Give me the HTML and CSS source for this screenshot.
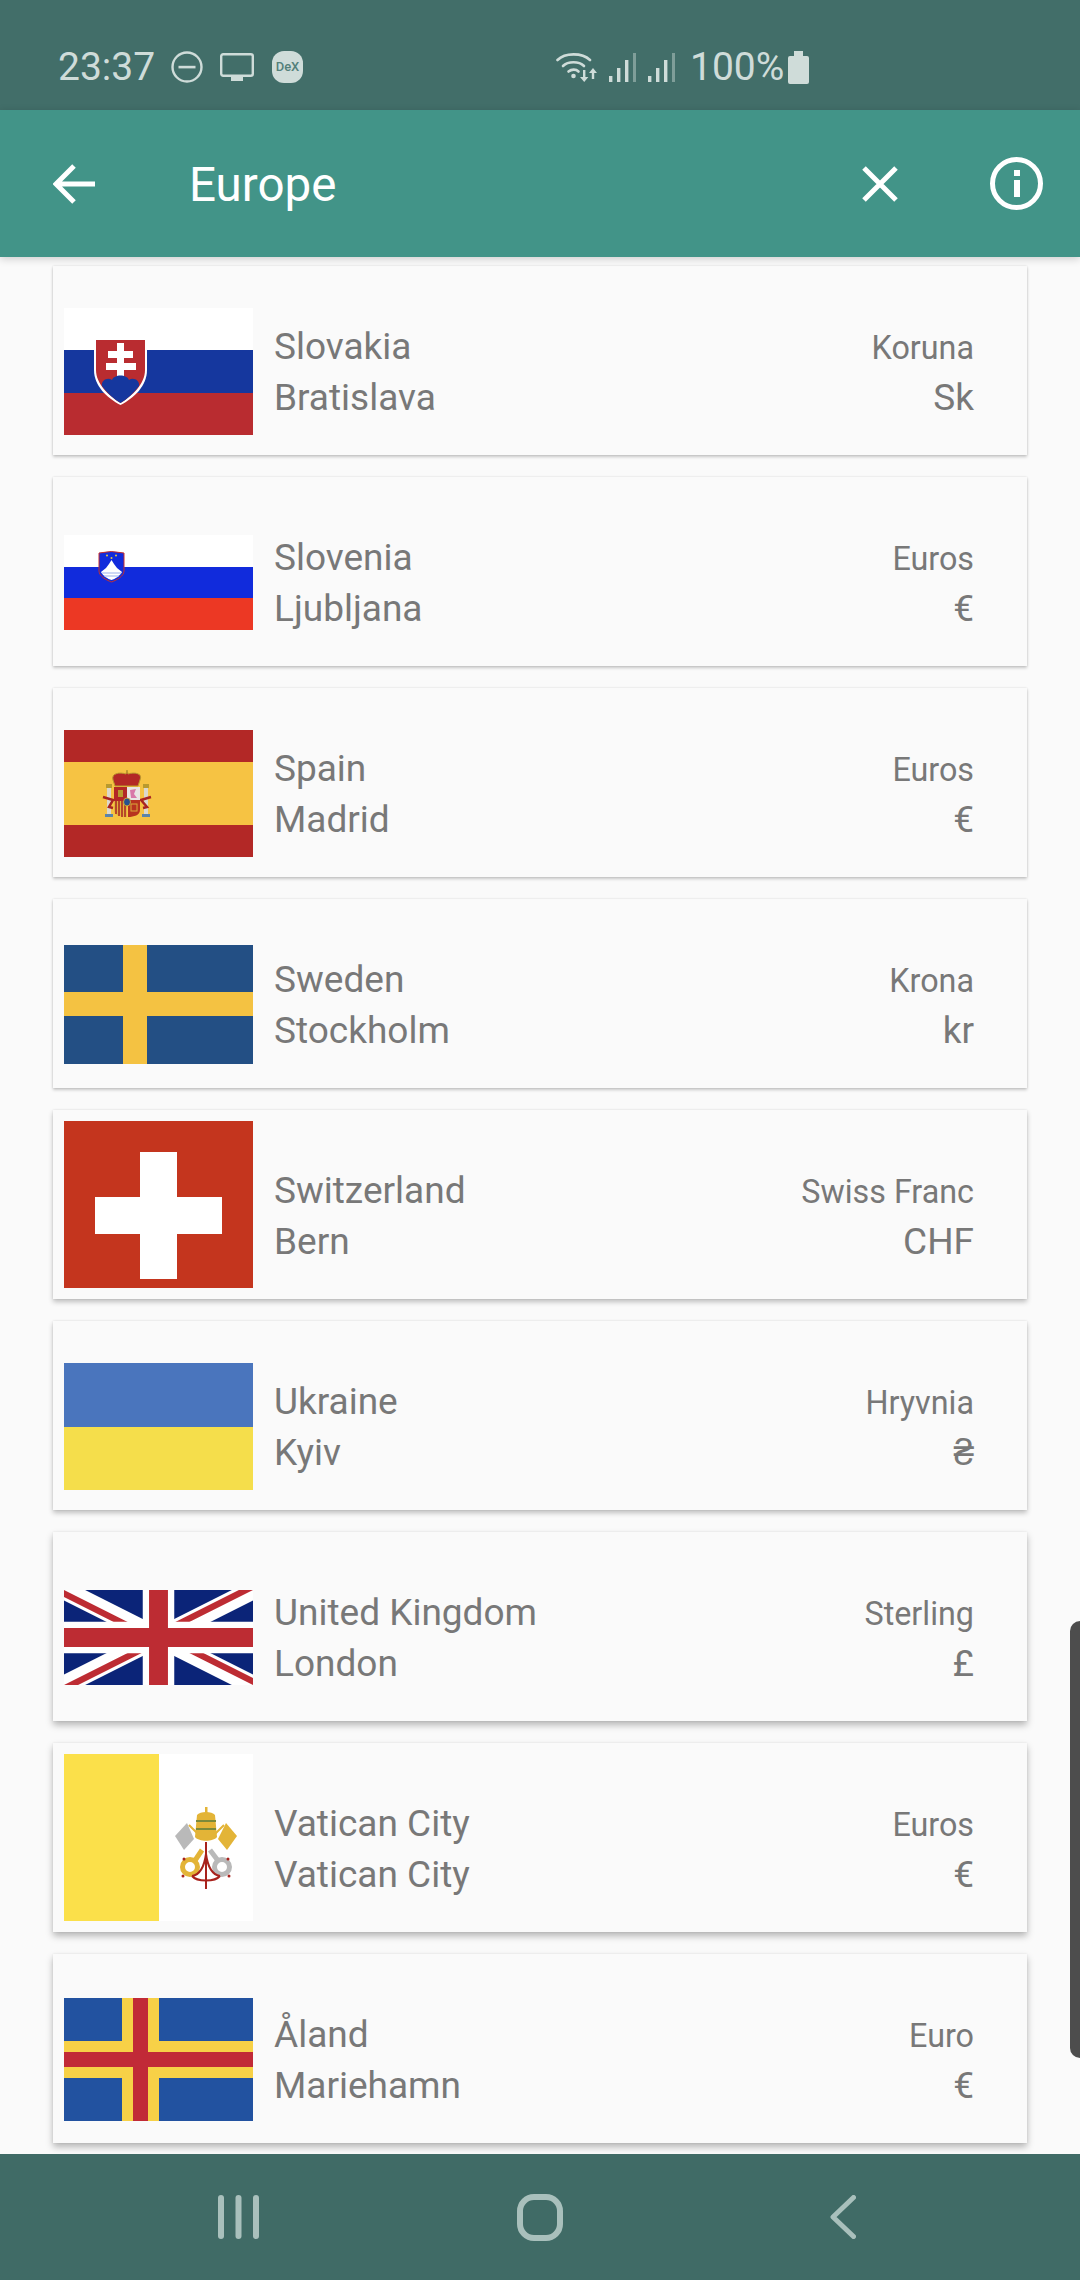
FILE: index.html
```html
<!DOCTYPE html>
<html lang="en">
<head>
    <meta charset="UTF-8">
    <meta name="viewport" content="width=device-width, initial-scale=1.0">
    <title>Europe</title>
    <link rel="stylesheet" href="styles.css">
</head>
<body>
    <div class="status-bar">
        <span class="status-time">23:37</span>
        <svg class="dnd-icon" width="32" height="32" viewBox="0 0 32 32"><circle cx="16" cy="16" r="14.5" fill="none" stroke="#cfdcd9" stroke-width="2.4"/><rect x="7.5" y="14.8" width="17" height="2.6" fill="#cfdcd9"/></svg>
        <svg class="screen-icon" width="34" height="28" viewBox="0 0 34 28"><rect x="1.2" y="1.2" width="31.6" height="21.6" rx="2" fill="none" stroke="#cfdcd9" stroke-width="2.4"/><rect x="11" y="24" width="12" height="4" fill="#cfdcd9"/></svg>
        <svg class="dex-icon" width="31" height="32" viewBox="0 0 31 32"><rect width="31" height="32" rx="12" fill="#cfdcd9"/><text x="15.5" y="20" text-anchor="middle" class="dex-text">DeX</text></svg>
        <svg class="wifi-icon" width="41" height="31" viewBox="0 0 41 31"><g fill="none" stroke="#cfdcd9" stroke-width="2.6" stroke-linecap="round"><path d="M1.5 8 C9 0.5 26 0.5 34 8"/><path d="M7 14 C12 9 23 9 28 14"/><path d="M12.5 19.5 C15.5 17 20 17 22.5 19.5"/></g><circle cx="17.5" cy="24" r="2.3" fill="#cfdcd9"/><path d="M27 18 h2.4 v7 h3 l-4.2 5 -4.2 -5 h3z" fill="#cfdcd9"/><path d="M37 16 l4 5 h-2.8 v6 h-2.4 v-6 h-2.8z" fill="#cfdcd9"/></svg>
        <svg class="signal-icon" width="27" height="29" viewBox="0 0 27 29"><rect y="23" width="3.4" height="6" fill="#cfdcd9"/><rect x="8" y="15" width="3.4" height="14" fill="#cfdcd9"/><rect x="16" y="7" width="3.4" height="22" fill="#cfdcd9"/><rect x="24" y="0" width="3" height="29" fill="#7f9e99"/></svg>
        <svg class="signal-icon second" width="27" height="29" viewBox="0 0 27 29"><rect y="23" width="3.4" height="6" fill="#cfdcd9"/><rect x="8" y="15" width="3.4" height="14" fill="#cfdcd9"/><rect x="16" y="7" width="3.4" height="22" fill="#cfdcd9"/><rect x="24" y="0" width="3" height="29" fill="#7f9e99"/></svg>
        <span class="status-battery">100%</span>
        <svg class="battery-icon" width="21" height="33" viewBox="0 0 21 33"><path d="M6 0 H15 V5 H19 Q21 5 21 7 V31 Q21 33 19 33 H2 Q0 33 0 31 V7 Q0 5 2 5 H6Z" fill="#cfdcd9"/></svg>
    </div>

    <div class="app-bar">
        <svg width="42" height="40" viewBox="0 0 42 40"><path d="M21 2 L3 20 L21 38 M3 20 H42" fill="none" stroke="#fff" stroke-width="5"/></svg>
        <span class="app-title">Europe</span>
        <svg class="close-icon" width="36" height="36" viewBox="0 0 36 36"><path d="M2 2 L34 34 M34 2 L2 34" fill="none" stroke="#fff" stroke-width="5"/></svg>
        <svg class="info-icon" width="53" height="53" viewBox="0 0 53 53"><circle cx="26.5" cy="26.5" r="24" fill="none" stroke="#fff" stroke-width="5"/><rect x="24" y="13" width="6" height="6" fill="#fff"/><rect x="24" y="23" width="6" height="17" fill="#fff"/></svg>
    </div>

    <div class="country-list">
        <div class="card">
            <div class="flag-box">
                <svg width="189" height="127" viewBox="0 0 189 127">
                    <rect width="189" height="127" fill="#fff"/>
                    <rect y="42" width="189" height="43" fill="#15379e"/>
                    <rect y="85" width="189" height="42" fill="#b92c30"/>
                    <path d="M30 31 H83 V62 C83 78 70 90 56.5 97 C43 90 30 78 30 62Z" fill="#fff"/>
                    <path d="M32 32 H81 V62 C81 76 68 88 56.5 95 C45 88 32 76 32 62Z" fill="#b92c30"/>
                    <path d="M53 35 H60 V43 H69 V50 H60 V55 H72 V62 H60 V71 H53 V62 H42 V55 H53 V50 H44 V43 H53Z" fill="#fff"/>
                    <path d="M38 78 C37 72 44 69 48 72 C50 66 63 66 65 72 C69 69 76 72 75 78 C70 85 63 91 56.5 95 C50 91 43 85 38 78Z" fill="#15379e"/>
                </svg>
            </div>
            <div class="names"><div>Slovakia</div><div>Bratislava</div></div>
            <div class="money"><div class="unit">Koruna</div><div class="sym">Sk</div></div>
        </div>

        <div class="card">
            <div class="flag-box">
                <svg width="189" height="95" viewBox="0 0 189 95">
                    <rect width="189" height="95" fill="#fff"/>
                    <rect y="32" width="189" height="31" fill="#112bdc"/>
                    <rect y="63" width="189" height="32" fill="#ec3824"/>
                    <path d="M35 18 Q47 15 60 18 V36 C60 41 53 45 47.5 47 C42 45 35 41 35 36Z" fill="#112bdc" stroke="#c9302c" stroke-width="1"/>
                    <path d="M37 37 L42 33 L45 29 L47.5 25 L50 29 L53 33 L58 37 C56 41 51 44 47.5 45 C44 44 39 41 37 37Z" fill="#fff"/>
                    <path d="M38 38 H57 M40 41 H55" stroke="#9db0ea" stroke-width="1"/>
                    <circle cx="43" cy="20.5" r="1" fill="#e8c93c"/><circle cx="52" cy="20.5" r="1" fill="#e8c93c"/><circle cx="47.5" cy="23" r="1" fill="#e8c93c"/>
                </svg>
            </div>
            <div class="names"><div>Slovenia</div><div>Ljubljana</div></div>
            <div class="money"><div class="unit">Euros</div><div class="sym">€</div></div>
        </div>

        <div class="card">
            <div class="flag-box">
                <svg width="189" height="127" viewBox="0 0 189 127">
                    <rect width="189" height="127" fill="#b32826"/>
                    <rect y="32" width="189" height="63" fill="#f6c343"/>
                    <!-- crown -->
                    <path d="M49 50 C47 43 56 42 62 44 L63 40 L64 44 C70 42 79 43 76 50 L74 56 H51Z" fill="#b32826" stroke="#b99a2e" stroke-width="1"/>
                    <!-- pillars -->
                    <rect x="43" y="58" width="4" height="26" fill="#dcd8cc"/><rect x="80" y="58" width="4" height="26" fill="#dcd8cc"/>
                    <rect x="42" y="54" width="6" height="4" fill="#b99a2e"/><rect x="79" y="54" width="6" height="4" fill="#b99a2e"/>
                    <rect x="41" y="84" width="8" height="3" fill="#5c84a8"/><rect x="78" y="84" width="8" height="3" fill="#5c84a8"/>
                    <path d="M39 67 L49 70 L45 77 L49 78" fill="none" stroke="#a92522" stroke-width="2.5"/>
                    <path d="M87 67 L77 70 L83 77 L79 78" fill="none" stroke="#a92522" stroke-width="2.5"/>
                    <!-- shield -->
                    <rect x="50" y="57" width="13" height="14" fill="#b32826"/>
                    <rect x="63" y="57" width="13" height="13" fill="#e9e4e4"/>
                    <path d="M50 71 H63 V87 C56 87 50 85 50 80Z" fill="#e2b33c"/>
                    <path d="M64 70 H76 V80 C76 85 70 87 64 87Z" fill="#b8331f"/>
                    <path d="M52 71 V84 M55 71 V86 M58 71 V87 M61 71 V87" stroke="#a92522" stroke-width="1.5"/>
                    <rect x="54" y="60" width="5" height="7" fill="#b99a2e"/>
                    <path d="M66 60 L72 59 L70 64 L73 68 L67 68Z" fill="#d877a8"/>
                    <rect x="67" y="74" width="6" height="7" fill="none" stroke="#d9a93a" stroke-width="1"/>
                    <ellipse cx="63" cy="72" rx="3.5" ry="4" fill="#27518f" stroke="#c9a53a" stroke-width="1"/>
                </svg>
            </div>
            <div class="names"><div>Spain</div><div>Madrid</div></div>
            <div class="money"><div class="unit">Euros</div><div class="sym">€</div></div>
        </div>

        <div class="card">
            <div class="flag-box">
                <svg width="189" height="119" viewBox="0 0 189 119">
                    <rect width="189" height="119" fill="#234f84"/>
                    <rect x="59" width="24" height="119" fill="#f4c242"/>
                    <rect y="47" width="189" height="24" fill="#f4c242"/>
                </svg>
            </div>
            <div class="names"><div>Sweden</div><div>Stockholm</div></div>
            <div class="money"><div class="unit">Krona</div><div class="sym">kr</div></div>
        </div>

        <div class="card">
            <div class="flag-box tall">
                <svg width="189" height="167" viewBox="0 0 189 167">
                    <rect width="189" height="167" fill="#c4351e"/>
                    <rect x="76" y="31" width="37" height="127" fill="#fff"/>
                    <rect x="31" y="76" width="127" height="37" fill="#fff"/>
                </svg>
            </div>
            <div class="names"><div>Switzerland</div><div>Bern</div></div>
            <div class="money"><div class="unit">Swiss Franc</div><div class="sym">CHF</div></div>
        </div>

        <div class="card">
            <div class="flag-box">
                <svg width="189" height="127" viewBox="0 0 189 127">
                    <rect width="189" height="64" fill="#4a75bd"/>
                    <rect y="64" width="189" height="63" fill="#f5de4b"/>
                </svg>
            </div>
            <div class="names"><div>Ukraine</div><div>Kyiv</div></div>
            <div class="money"><div class="unit">Hryvnia</div><div class="sym">₴</div></div>
        </div>

        <div class="card">
            <div class="flag-box">
                <svg width="189" height="95" viewBox="0 0 60 30" preserveAspectRatio="none">
                    <clipPath id="uk-clip"><path d="M30 15 H60 V30Z M30 15 V30 H0Z M30 15 H0 V0Z M30 15 V0 H60Z"/></clipPath>
                    <rect width="60" height="30" fill="#0b2478"/>
                    <path d="M0 0 L60 30 M60 0 L0 30" stroke="#fff" stroke-width="6"/>
                    <path d="M0 0 L60 30 M60 0 L0 30" stroke="#bd2c33" stroke-width="4" clip-path="url(#uk-clip)"/>
                    <path d="M30 0 V30 M0 15 H60" stroke="#fff" stroke-width="10"/>
                    <path d="M30 0 V30 M0 15 H60" stroke="#bd2c33" stroke-width="6"/>
                </svg>
            </div>
            <div class="names"><div>United Kingdom</div><div>London</div></div>
            <div class="money"><div class="unit">Sterling</div><div class="sym">£</div></div>
        </div>

        <div class="card">
            <div class="flag-box tall">
                <svg width="189" height="167" viewBox="0 0 189 167">
                    <rect width="189" height="167" fill="#fff"/>
                    <rect width="95" height="167" fill="#fbe04a"/>
                    <!-- flags behind the tiara -->
                    <path d="M111 82 L123 69 L130 85 L120 96Z" fill="#b9b9b9"/>
                    <path d="M154 85 L162 69 L173 82 L163 96Z" fill="#e3b437"/>
                    <path d="M125 71 L138 84 M160 71 L147 84" stroke="#e3b437" stroke-width="2"/>
                    <!-- keys -->
                    <path d="M138 96 L130 108" stroke="#e3b437" stroke-width="5"/>
                    <path d="M146 96 L155 108" stroke="#b9b9b9" stroke-width="5"/>
                    <circle cx="126" cy="113" r="7.5" fill="none" stroke="#e3b437" stroke-width="5"/>
                    <circle cx="158" cy="113" r="7.5" fill="none" stroke="#b9b9b9" stroke-width="5"/>
                    <!-- tiara -->
                    <path d="M133 61 C136 57 148 57 151 61 L153 83 C149 88 135 88 131 83Z" fill="#e3b437"/>
                    <path d="M132 67 H152 M132 75 H152" stroke="#7b8a3a" stroke-width="2"/>
                    <rect x="141" y="53" width="2.5" height="7" fill="#e3b437"/>
                    <!-- cord -->
                    <path d="M142 88 V135 M142 100 C140 115 134 121 128 122 M142 100 C144 115 150 121 156 122 M128 122 C133 128 151 128 156 122" fill="none" stroke="#a8221c" stroke-width="2"/>
                    <circle cx="120" cy="105" r="1.5" fill="#a8221c"/><circle cx="164" cy="105" r="1.5" fill="#a8221c"/>
                    <circle cx="119" cy="122" r="1.5" fill="#a8221c"/><circle cx="165" cy="122" r="1.5" fill="#a8221c"/>
                </svg>
            </div>
            <div class="names"><div>Vatican City</div><div>Vatican City</div></div>
            <div class="money"><div class="unit">Euros</div><div class="sym">€</div></div>
        </div>

        <div class="card">
            <div class="flag-box">
                <svg width="189" height="123" viewBox="0 0 189 123">
                    <rect width="189" height="123" fill="#2252a0"/>
                    <rect x="58" width="37" height="123" fill="#f7d147"/>
                    <rect y="43" width="189" height="37" fill="#f7d147"/>
                    <rect x="69" width="15" height="123" fill="#c12a37"/>
                    <rect y="54" width="189" height="15" fill="#c12a37"/>
                </svg>
            </div>
            <div class="names"><div>Åland</div><div>Mariehamn</div></div>
            <div class="money"><div class="unit">Euro</div><div class="sym">€</div></div>
        </div>
    </div>

    <div class="scroll-thumb"></div>

    <div class="nav-bar">
        <svg width="41" height="44" viewBox="0 0 41 44"><rect x="0" width="6" height="44" rx="3" fill="#a9c0bc"/><rect x="17.5" width="6" height="44" rx="3" fill="#a9c0bc"/><rect x="35" width="6" height="44" rx="3" fill="#a9c0bc"/></svg>
        <svg width="46" height="47" viewBox="0 0 46 47"><rect x="3" y="3" width="40" height="41" rx="14" fill="none" stroke="#a9c0bc" stroke-width="6"/></svg>
        <svg class="nav-back" width="26" height="44" viewBox="0 0 26 44"><path d="M23.5 2.5 L3 22 L23.5 41.5" fill="none" stroke="#a9c0bc" stroke-width="5" stroke-linecap="round" stroke-linejoin="round"/></svg>
    </div>
</body>
</html>
```

FILE: styles.css
```css
body {
    margin: 0;
    width: 1080px;
    height: 2280px;
    overflow: hidden;
    display: flex;
    flex-direction: column;
    position: relative;
    background-color: #fafafa;
    font-family: Roboto, sans-serif;
}

svg {
    display: block;
    flex-shrink: 0;
}

.status-bar {
    height: 110px;
    box-sizing: border-box;
    padding: 24px 0 0 58px;
    display: flex;
    align-items: center;
    background-color: #426e69;
    color: #cfdcd9;
    font-size: 39px;
}

.status-time {
    width: 113px;
}

.screen-icon {
    margin-left: 17px;
}

.dex-icon {
    margin-left: 18px;
}

.dex-text {
    font-size: 13px;
    font-weight: 500;
    fill: #54807a;
}

.wifi-icon {
    margin-left: 253px;
}

.signal-icon {
    margin-left: 12px;
}

.status-battery {
    margin-left: 15px;
    width: 98px;
}

.app-bar {
    height: 147px;
    box-sizing: border-box;
    padding: 0 37px 0 53px;
    display: flex;
    align-items: center;
    background-color: #429488;
    box-shadow: 0 2px 8px rgba(0, 0, 0, 0.18);
    z-index: 1;
}

.app-title {
    margin-left: 94px;
    padding-top: 3px;
    font-size: 47.5px;
    color: #fff;
}

.close-icon {
    margin-left: auto;
}

.info-icon {
    margin-left: 92px;
}

.country-list {
    flex: 1;
    min-height: 0;
    overflow: hidden;
    padding: 9px 53px 0;
    display: flex;
    flex-direction: column;
    gap: 22px;
}

.card {
    height: 189px;
    flex-shrink: 0;
    box-sizing: border-box;
    padding: 0 53px 0 11px;
    display: flex;
    align-items: flex-start;
    background-color: #fafafa;
    box-shadow: 0 2px 3px rgba(0, 0, 0, 0.2), 0 0 2px rgba(0, 0, 0, 0.12);
    color: #787878;
}

.card:nth-child(n+5) {
    box-shadow: 0 3px 5px rgba(0, 0, 0, 0.24), 0 0 2px rgba(0, 0, 0, 0.1);
}

.card:nth-child(n+7) {
    box-shadow: 0 4px 7px rgba(0, 0, 0, 0.28), 0 0 2px rgba(0, 0, 0, 0.08);
}

.flag-box {
    width: 189px;
    height: 167px;
    margin-top: 22px;
    display: flex;
    align-items: center;
}

.flag-box.tall {
    margin-top: 11px;
}

.names {
    margin-left: 21px;
    padding-top: 55px;
    font-size: 37px;
    line-height: 51px;
}

.money {
    margin-left: auto;
    padding-top: 58px;
    text-align: right;
}

.unit {
    font-size: 32.3px;
    line-height: 48px;
}

.sym {
    font-size: 37px;
    line-height: 51px;
}

.scroll-thumb {
    position: absolute;
    top: 1621px;
    right: 0;
    width: 10px;
    height: 437px;
    box-sizing: border-box;
    background-color: #4d4d4d;
    border-radius: 10px 0 0 10px;
}

.nav-bar {
    height: 126px;
    flex-shrink: 0;
    box-sizing: border-box;
    padding-left: 218px;
    display: flex;
    align-items: center;
    gap: 258px;
    background-color: #406b66;
}

.nav-back {
    margin-left: 9px;
}
```
